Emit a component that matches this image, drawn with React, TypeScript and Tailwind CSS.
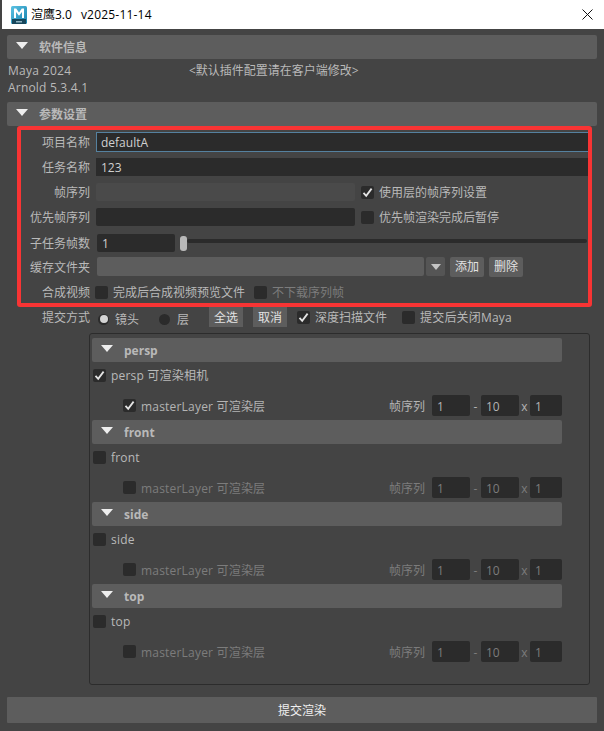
const font = { fontFamily: '"Open Sans", "Noto Sans CJK SC", sans-serif' }

function Check({ on = false }: { on?: boolean }) {
    return (
        <span className="flex h-[13px] w-[13px] shrink-0 items-center justify-center rounded-[2px] bg-[#2b2b2b]">
            {on && (
                <svg width="11" height="11" viewBox="0 0 11 11" fill="none">
                    <path d="M1.5 5.8 L4.2 8.8 L9.6 1.6" stroke="#e4e4e4" strokeWidth="1.8" />
                </svg>
            )}
        </span>
    )
}

function Header({ title }: { title: string }) {
    return (
        <div className="flex h-[24px] items-center rounded-[2px] bg-[#5d5d5d]">
            <span className="ml-[9px] mb-[3px] h-0 w-0 border-x-[6px] border-t-[7px] border-x-transparent border-t-[#eeeeee]" />
            <span className="ml-[11px] pt-[2px] text-[12px] font-bold text-[#b9b9b9]">{title}</span>
        </div>
    )
}

function Label({ text }: { text: string }) {
    return <span className="w-[69px] shrink-0 pt-[2px] text-right text-[12px] leading-[18px]">{text}</span>
}

function CameraBlock({ name, on = false }: { name: string; on?: boolean }) {
    const dim = on ? "text-[#b4b4b4]" : "text-[#7c7c7c]"
    return (
        <div>
            <Header title={name} />
            <div className="mt-[6px] ml-[1px] flex h-[14px] items-center">
                <Check on={on} />
                <span className="ml-[5px] pt-[2px] text-[12px] tracking-[0.2px] text-[#b9b9b9]">{on ? `${name} 可渲染相机` : name}</span>
            </div>
            <div className={`mt-[13px] mb-[4px] flex h-[21px] items-center text-[12px] ${dim}`}>
                <span className="ml-[31px]">
                    <Check on={on} />
                </span>
                <span className="ml-[5px] pt-[2px] tracking-[0.2px]">masterLayer 可渲染层</span>
                <span className="ml-auto pt-[2px]">帧序列</span>
                <span className="ml-[7px] flex h-full w-[38px] items-center rounded-[2px] bg-[#2b2b2b] pl-[5px] pt-[2px]">1</span>
                <span className="w-[11px] pt-[2px] text-center">-</span>
                <span className="flex h-full w-[38px] items-center rounded-[2px] bg-[#2b2b2b] pl-[5px] pt-[2px]">10</span>
                <span className="w-[11px] pt-[2px] text-center">x</span>
                <span className="flex h-full w-[32px] items-center rounded-[2px] bg-[#2b2b2b] pl-[5px] pt-[2px]">1</span>
            </div>
        </div>
    )
}

export default function App() {
    return (
        <div style={font} className="flex h-[731px] w-[604px] flex-col overflow-hidden bg-[#444444] text-[#b9b9b9]">
            {/* Title bar */}
            <div className="ml-[2px] flex h-[29px] shrink-0 items-center bg-white text-black">
                <svg className="ml-[8px]" width="18" height="18" viewBox="0 0 18 18">
                    <defs>
                        <linearGradient id="maya" x1="0" y1="0" x2="1" y2="1">
                            <stop offset="0" stopColor="#5cc3e4" />
                            <stop offset="1" stopColor="#1681ad" />
                        </linearGradient>
                    </defs>
                    <rect x="1" y="0" width="16" height="18" rx="1.5" fill="url(#maya)" />
                    <rect x="2" y="13" width="14" height="5" fill="#17475c" />
                    <rect x="6" y="15" width="6" height="1.5" fill="#8fb3c2" />
                    <path d="M4 12 V2.5 H6.2 L9 6.5 L11.8 2.5 H14 V12 H12 V6 L9 9.8 L6 6 V12 Z" fill="#ffffff" />
                </svg>
                <span className="ml-[3px] pt-[1px] text-[12px]">渲鹰3.0</span>
                <span className="ml-[9px] pt-[1px] text-[12px] tracking-[0.2px]">v2025-11-14</span>
                <svg className="ml-auto mr-[11px]" width="11" height="11" viewBox="0 0 11 11" stroke="#111" strokeWidth="1" fill="none">
                    <path d="M0.5 0.5 L10.5 10.5 M10.5 0.5 L0.5 10.5" />
                </svg>
            </div>

            <div className="flex flex-col px-[7px] pt-[6px]">
                <Header title="软件信息" />
                <div className="flex h-[43px] flex-col pl-[1px] pt-[3px] text-[12px] leading-[17px]">
                    <div className="flex">
                        <span className="w-[181px] tracking-[0.3px]">Maya 2024</span>
                        <span>&lt;默认插件配置请在客户端修改&gt;</span>
                    </div>
                    <span className="tracking-[0.2px]">Arnold 5.3.4.1</span>
                </div>
                <Header title="参数设置" />

                {/* Highlighted parameters */}
                <div className="ml-[10px] flex h-[181px] w-[575px] flex-col overflow-hidden rounded-[3px] border-[4px] border-[#f83434]">
                    <div className="mt-[2px] flex h-[20px] items-center gap-[6px]">
                        <Label text="项目名称" />
                        <span className="flex h-full flex-1 items-center border-y border-l border-[#55819f] bg-[#2b2b2b] pl-[4px] pt-[1px] text-[12px] text-[#d0d0d0]">defaultA</span>
                    </div>
                    <div className="mt-[6px] flex h-[18px] items-center gap-[6px]">
                        <Label text="任务名称" />
                        <span className="flex h-full flex-1 items-center bg-[#2b2b2b] pl-[5px] pt-[1px] text-[12px] text-[#d0d0d0]">123</span>
                    </div>
                    <div className="mt-[7px] flex h-[18px] items-center gap-[6px]">
                        <Label text="帧序列" />
                        <span className="h-full w-[259px] rounded-[2px] bg-[#4a4a4a]" />
                        <Check on />
                        <span className="ml-[-1px] pt-[2px] text-[12px]">使用层的帧序列设置</span>
                    </div>
                    <div className="mt-[7px] flex h-[18px] items-center gap-[6px]">
                        <Label text="优先帧序列" />
                        <span className="h-full w-[259px] rounded-[2px] bg-[#2b2b2b]" />
                        <Check />
                        <span className="ml-[-1px] pt-[2px] text-[12px]">优先帧渲染完成后暂停</span>
                    </div>
                    <div className="mt-[8px] flex h-[18px] items-center">
                        <Label text="子任务帧数" />
                        <span className="ml-[7px] flex h-full w-[78px] items-center rounded-[2px] bg-[#2b2b2b] pl-[5px] pt-[2px] text-[12px] text-[#d0d0d0]">1</span>
                        <span className="ml-[5px] h-[15px] w-[7px] rounded-[3px] bg-[#b8b8b8]" />
                        <span className="mb-[4px] mr-[1px] h-[4px] flex-1 rounded-[2px] bg-[#2b2b2b]" />
                    </div>
                    <div className="mt-[5px] flex h-[19px] items-center">
                        <Label text="缓存文件夹" />
                        <span className="ml-[7px] h-full w-[327px] rounded-[2px] bg-[#5d5d5d]" />
                        <span className="ml-[2px] flex h-full w-[19px] items-center justify-center rounded-[2px] bg-[#555555]">
                            <span className="h-0 w-0 border-x-[5px] border-t-[6px] border-x-transparent border-t-[#c4c4c4]" />
                        </span>
                        <span className="ml-[5px] flex h-[20px] w-[34px] items-center justify-center rounded-[2px] bg-[#5d5d5d] pt-[1px] text-[12px] text-[#e2e2e2]">添加</span>
                        <span className="ml-[5px] flex h-[20px] w-[34px] items-center justify-center rounded-[2px] bg-[#5d5d5d] pt-[1px] text-[12px] text-[#e2e2e2]">删除</span>
                    </div>
                    <div className="mt-[8px] flex h-[16px] items-center">
                        <Label text="合成视频" />
                        <span className="ml-[5px]"><Check /></span>
                        <span className="ml-[5px] pt-[2px] text-[12px]">完成后合成视频预览文件</span>
                        <span className="ml-[9px]"><Check /></span>
                        <span className="ml-[5px] pt-[2px] text-[12px] text-[#7c7c7c]">不下载序列帧</span>
                    </div>
                </div>

                {/* Submit mode */}
                <div className="flex h-[20px] items-center text-[12px]">
                    <span className="ml-[35px] w-[48px] pt-[2px] text-right">提交方式</span>
                    <span className="ml-[8px] mt-[4px] flex h-[11px] w-[11px] items-center justify-center rounded-full bg-[#2b2b2b]">
                        <span className="h-[8px] w-[8px] rounded-full bg-[#d4d4d4]" />
                    </span>
                    <span className="ml-[6px] w-[24px] pt-[6px]">镜头</span>
                    <span className="ml-[20px] mt-[4px] h-[11px] w-[11px] rounded-full bg-[#2b2b2b]" />
                    <span className="ml-[7px] w-[12px] pt-[6px]">层</span>
                    <span className="ml-[20px] flex h-[20px] w-[34px] items-center justify-center bg-[#5d5d5d] pt-[1px] text-[#e2e2e2]">全选</span>
                    <span className="ml-[10px] flex h-[20px] w-[34px] items-center justify-center bg-[#5d5d5d] pt-[1px] text-[#e2e2e2]">取消</span>
                    <span className="ml-[10px]"><Check on /></span>
                    <span className="ml-[5px] w-[72px] pt-[2px]">深度扫描文件</span>
                    <span className="ml-[15px]"><Check /></span>
                    <span className="ml-[5px] pt-[2px] tracking-[0.2px]">提交后关闭Maya</span>
                </div>

                {/* Cameras */}
                <div className="ml-[82px] mt-[6px] h-[352px] w-[501px] rounded-[3px] border border-[#2c2c2c] pl-[2px] pr-[27px] pt-[4px]">
                    <CameraBlock name="persp" on />
                    <CameraBlock name="front" />
                    <CameraBlock name="side" />
                    <CameraBlock name="top" />
                </div>

                <button className="mt-[12px] h-[26px] w-[590px] rounded-[1px] bg-[#5d5d5d] pt-[2px] text-[12px] text-[#f0f0f0]">提交渲染</button>
            </div>
        </div>
    )
}
